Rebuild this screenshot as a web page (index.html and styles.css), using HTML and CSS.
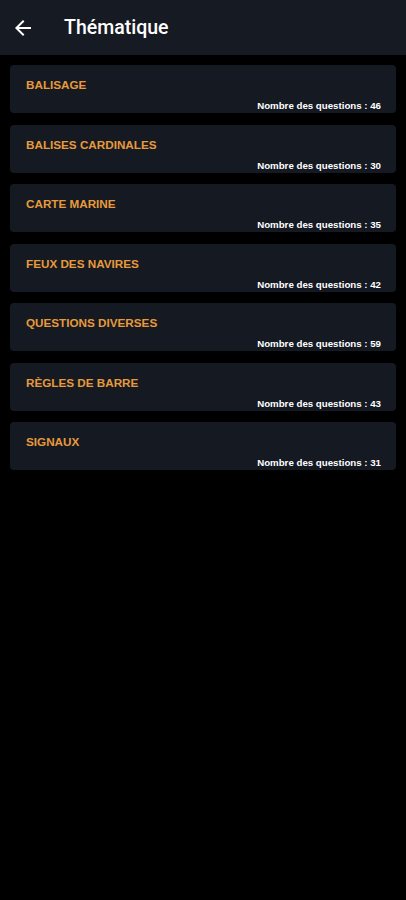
FILE: index.html
```html
<!DOCTYPE html>
<html lang="fr">
<head>
    <meta charset="UTF-8">
    <meta name="viewport" content="width=device-width, initial-scale=1.0">
    <title>Thématique</title>
    <link rel="stylesheet" href="styles.css">
</head>
<body>
    <div id="barre_haut">
        <svg class="icone_retour" viewBox="0 0 24 24" width="24" height="24">
            <path d="M20 11H7.83l5.59-5.59L12 4l-8 8 8 8 1.41-1.41L7.83 13H20v-2z" fill="#fff"/>
        </svg>
        <h1>Thématique</h1>
    </div>

    <div id="liste_themes">
        <div class="carte_theme">
            <p class="nom_theme">BALISAGE</p>
            <p class="nb_questions">Nombre des questions : 46</p>
        </div>
        <div class="carte_theme">
            <p class="nom_theme">BALISES CARDINALES</p>
            <p class="nb_questions">Nombre des questions : 30</p>
        </div>
        <div class="carte_theme">
            <p class="nom_theme">CARTE MARINE</p>
            <p class="nb_questions">Nombre des questions : 35</p>
        </div>
        <div class="carte_theme">
            <p class="nom_theme">FEUX DES NAVIRES</p>
            <p class="nb_questions">Nombre des questions : 42</p>
        </div>
        <div class="carte_theme">
            <p class="nom_theme">QUESTIONS DIVERSES</p>
            <p class="nb_questions">Nombre des questions : 59</p>
        </div>
        <div class="carte_theme">
            <p class="nom_theme">RÈGLES DE BARRE</p>
            <p class="nb_questions">Nombre des questions : 43</p>
        </div>
        <div class="carte_theme">
            <p class="nom_theme">SIGNAUX</p>
            <p class="nb_questions">Nombre des questions : 31</p>
        </div>
    </div>
</body>
</html>
```

FILE: styles.css
```css
html, body {
    margin: 0;
    padding: 0;
    width: 100%;
    height: 100%;
    background-color: #000;
    font-family: "Liberation Sans", Arial, sans-serif;
}

#barre_haut {
    display: flex;
    align-items: center;
    height: 55px;
    padding-left: 11px;
    background-color: #161a23;
    box-sizing: border-box;
}

.icone_retour {
    display: block;
    flex-shrink: 0;
    margin-top: 1px;
}

h1 {
    margin: 0 0 0 29px;
    padding: 0;
    font-family: "Roboto", sans-serif;
    font-size: 19.5px;
    font-weight: 500;
    color: #fff;
}

#liste_themes {
    display: flex;
    flex-direction: column;
    gap: 11.5px;
    padding: 10px;
}

.carte_theme {
    background-color: #151922;
    border-radius: 4px;
    padding: 12px 15px 1px 16px;
    height: 48px;
    box-sizing: border-box;
}

.nom_theme {
    margin: 0;
    font-size: 11.7px;
    line-height: 16px;
    font-weight: 700;
    color: #e89a3c;
}

.nb_questions {
    margin: 7px 0 0 0;
    font-size: 9.7px;
    line-height: 12px;
    font-weight: 700;
    color: #fff;
    text-align: right;
}
```
